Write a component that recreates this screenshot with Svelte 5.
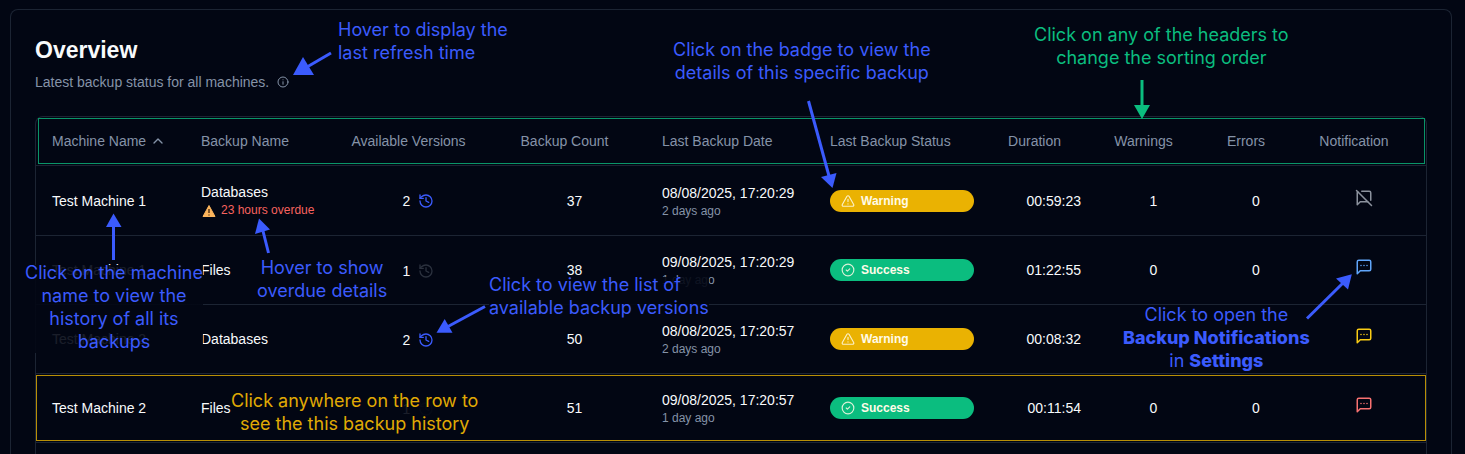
<script>
  const columns = [
    { label: 'Machine Name', width: 149, align: 'left' },
    { label: 'Backup Name', width: 149, align: 'left' },
    { label: 'Available Versions', width: 169, align: 'center' },
    { label: 'Backup Count', width: 143, align: 'center' },
    { label: 'Last Backup Date', width: 168, align: 'left' },
    { label: 'Last Backup Status', width: 176, align: 'left' },
    { label: 'Duration', width: 107, align: 'right' },
    { label: 'Warnings', width: 113, align: 'center' },
    { label: 'Errors', width: 92, align: 'center' },
    { label: 'Notification', width: 124, align: 'center' }
  ];

  const rows = [
    { machine: 'Test Machine 1', backup: 'Databases', overdue: '23 hours overdue', versions: 2, count: 37, date: '08/08/2025, 17:20:29', ago: '2 days ago', status: 'Warning', duration: '00:59:23', warnings: 1, errors: 0, notify: 'off' },
    { machine: 'Test Machine 1', backup: 'Files', versions: 1, count: 38, date: '09/08/2025, 17:20:29', ago: '1 day ago', status: 'Success', duration: '01:22:55', warnings: 0, errors: 0, notify: 'all' },
    { machine: 'Test Machine 2', backup: 'Databases', versions: 2, count: 50, date: '08/08/2025, 17:20:57', ago: '2 days ago', status: 'Warning', duration: '00:08:32', warnings: 1, errors: 0, notify: 'warnings' },
    { machine: 'Test Machine 2', backup: 'Files', versions: 1, count: 51, date: '09/08/2025, 17:20:57', ago: '1 day ago', status: 'Success', duration: '00:11:54', warnings: 0, errors: 0, notify: 'errors', framed: true }
  ];
</script>

<main class="page">
  <section class="card">
    <h1>Overview</h1>
    <p class="subtitle">
      Latest backup status for all machines.
      <button class="plain info" aria-label="Last refresh time">
        <svg viewBox="0 0 24 24" width="12" height="12" fill="none" stroke="currentColor" stroke-width="2" stroke-linecap="round">
          <circle cx="12" cy="12" r="10" /><path d="M12 16.500v-5M12 7.500h.01" />
        </svg>
      </button>
    </p>

    <div class="table-box">
      <table>
        <colgroup>
          {#each columns as c}<col style="width: {c.width}px" />{/each}
        </colgroup>
        <thead>
          <tr>
            {#each columns as c, i}
              <th class={c.align}>
                <button class="plain sort">
                  {c.label}
                  <svg viewBox="0 0 24 24" width="16" height="16" fill="none" stroke="currentColor" stroke-width="2" stroke-linecap="round" stroke-linejoin="round">
                    {#if i === 0}<path d="m18 15-6-6-6 6" />{/if}
                  </svg>
                </button>
              </th>
            {/each}
          </tr>
        </thead>
        <tbody>
          {#each rows as r}
            <tr class:framed={r.framed}>
              <td><button class="plain">{r.machine}</button></td>
              <td>
                <div>{r.backup}</div>
                {#if r.overdue}
                  <button class="plain overdue">
                    <svg viewBox="0 0 14 14" width="14" height="14">
                      <path d="M7 1.500 13 12.500H1Z" fill="#fbb45c" stroke="#fbb45c" stroke-linejoin="round" />
                      <path d="M7 5v4M7 10.500v1" stroke="#4a2c10" stroke-width="1.400" />
                    </svg>
                    {r.overdue}
                  </button>
                {/if}
              </td>
              <td class="center">
                <span class="versions">
                  {r.versions}
                  <button class="plain history" disabled={r.versions < 2} aria-label="Available versions">
                    <svg viewBox="0 0 24 24" width="16" height="16" fill="none" stroke="currentColor" stroke-width="2" stroke-linecap="round" stroke-linejoin="round">
                      <path d="M3 12a9 9 0 1 0 9-9 9.750 9.750 0 0 0-6.740 2.740L3 8" /><path d="M3 3v5h5" /><path d="M12 7v5l4 2" />
                    </svg>
                  </button>
                </span>
              </td>
              <td class="center">{r.count}</td>
              <td>
                <div>{r.date}</div>
                <div class="ago">{r.ago}</div>
              </td>
              <td>
                <button class="plain badge {r.status.toLowerCase()}">
                  <svg viewBox="0 0 24 24" width="14" height="14" fill="none" stroke="currentColor" stroke-width="2" stroke-linecap="round" stroke-linejoin="round">
                    {#if r.status === 'Warning'}
                      <path d="m21.730 18-8-14a2 2 0 0 0-3.480 0l-8 14A2 2 0 0 0 4 21h16a2 2 0 0 0 1.730-3" /><path d="M12 9v4M12 17h.01" />
                    {:else}
                      <circle cx="12" cy="12" r="10" /><path d="m9 12 2 2 4-4" />
                    {/if}
                  </svg>
                  {r.status}
                </button>
              </td>
              <td class="right">{r.duration}</td>
              <td class="center">{r.warnings}</td>
              <td class="center">{r.errors}</td>
              <td class="center">
                <button class="plain notify {r.notify}" aria-label="Notification settings">
                  <svg viewBox="0 0 24 24" width="18" height="18" fill="none" stroke="currentColor" stroke-width="2" stroke-linecap="round" stroke-linejoin="round">
                    {#if r.notify === 'off'}
                      <path d="M21 15V5a2 2 0 0 0-2-2H9" /><path d="m2 2 20 20" /><path d="M3.600 3.600c-.4.300-.6.800-.6 1.400v16l4-4h10" />
                    {:else}
                      <path d="M21 15a2 2 0 0 1-2 2H7l-4 4V5a2 2 0 0 1 2-2h14a2 2 0 0 1 2 2z" /><path d="M8 10h.01M12 10h.01M16 10h.01" />
                    {/if}
                  </svg>
                </button>
              </td>
            </tr>
          {/each}
        </tbody>
      </table>
    </div>
  </section>

  <p class="note refresh">Hover to display the<br />last refresh time</p>
  <p class="note details">Click on the badge to view the<br />details of this specific backup</p>
  <p class="note sorting">Click on any of the headers to<br />change the sorting order</p>
  <p class="note machine">Click on the machine<br />name to view the<br />history of all its<br />backups</p>
  <p class="note late">Hover to show<br />overdue details</p>
  <p class="note list">Click to view the list of<br />available backup versions</p>
  <p class="note settings">Click to open the<br /><b>Backup Notifications</b><br />in <b>Settings</b></p>
  <p class="note row">Click anywhere on the row to<br />see the this backup history</p>

  <svg class="arrows" width="1465" height="454" viewBox="0 0 1465 454" aria-hidden="true">
    <g stroke="#3b5bfd" fill="#3b5bfd">
      <path d="M331 53 307 67" /><path class="head" d="M293 75 303 57 314 75Z" />
      <path d="M808.500 101 829 176" /><path class="head" d="M832.500 188 821 177 836.500 173Z" />
      <path d="M113.500 260V226" /><path class="head" d="M113.500 213.500 106 227H121.500Z" />
      <path d="M268.500 253 263 231" /><path class="head" d="M259 218.500 255 234 270 229.500Z" />
      <path d="M485 306.500 448 326.500" /><path class="head" d="M436.500 332.800 444.700 319 452.500 332.800Z" />
      <path d="M1307 318.500 1343 283" /><path class="head" d="M1351.800 274.300 1336 278.500 1348 289.500Z" />
    </g>
    <g stroke="#0bbd7f" fill="#0bbd7f">
      <path d="M1142 80V106" /><path class="head" d="M1142 119 1134 105H1150Z" />
    </g>
  </svg>
</main>

<style>
  :global(body) {
    background: #020613;
    overflow: hidden;
  }

  .page {
    position: relative;
    display: flex;
    box-sizing: border-box;
    min-height: 100vh;
    padding: 9px 13px 0 10px;
    overflow: hidden;
    color: #f8fafc;
    font: 14px/20px "Liberation Sans", Arial, sans-serif;
  }

  .card {
    flex: 1;
    display: flex;
    flex-direction: column;
    min-width: 0;
    padding: 24px 24px 0;
    border: 1px solid #1c2433;
    border-bottom: 0;
    border-radius: 8px 8px 0 0;
  }

  h1 {
    margin: 0 0 6px;
    font-size: 23px;
    line-height: 32px;
  }

  .subtitle {
    display: flex;
    align-items: center;
    gap: 8px;
    margin: 0 0 24px;
    color: #8593a8;
  }

  .plain {
    padding: 0;
    border: 0;
    background: none;
    color: inherit;
    font: inherit;
    cursor: pointer;
  }

  svg {
    display: block;
    flex: none;
  }

  .table-box {
    flex: 1;
    border: 1px solid #1c2433;
    border-bottom: 0;
    border-radius: 8px 8px 0 0;
  }

  table {
    width: 100%;
    table-layout: fixed;
    border-collapse: separate;
    border-spacing: 0;
  }

  tr {
    position: relative;
  }

  th,
  td {
    padding: 16px;
    border-bottom: 1px solid #1c2433;
    text-align: left;
    vertical-align: middle;
    white-space: nowrap;
  }

  th {
    height: 46px;
    padding: 0 16px 2px;
    color: #8593a8;
    font-weight: 400;
  }

  .center {
    padding-inline: 0;
    text-align: center;
  }

  .right {
    text-align: right;
  }

  .sort {
    display: inline-flex;
    align-items: center;
    gap: 4px;
    vertical-align: middle;
  }

  thead tr::after,
  .framed::after {
    content: "";
    position: absolute;
    inset: 1px 1px 2px 2px;
    border: 1px solid #0a9468;
    pointer-events: none;
  }

  .framed::after {
    inset: 1px 0 2px;
    border-color: #b98f06;
  }

  .overdue {
    display: flex;
    align-items: center;
    gap: 5px;
    padding-left: 1px;
    color: #f8635f;
    font-size: 12px;
    line-height: 17px;
  }

  .ago {
    color: #8593a8;
    font-size: 12px;
    line-height: 16px;
  }

  .versions {
    display: inline-flex;
    align-items: center;
    gap: 8px;
    vertical-align: middle;
  }

  .history {
    color: #3b5bfd;
  }

  .history:disabled {
    color: #2b313e;
  }

  .badge {
    display: flex;
    align-items: center;
    gap: 6px;
    width: 100%;
    height: 22px;
    padding: 0 11px;
    border-radius: 11px;
    color: #fffbe8;
    font-size: 12px;
    font-weight: 700;
  }

  .badge svg {
    opacity: 0.85;
  }

  .warning {
    background: #eab202;
  }

  .success {
    background: #0bbd7f;
  }

  .notify {
    display: inline-block;
    padding-bottom: 6px;
    vertical-align: middle;
  }

  .off {
    color: #8b919d;
  }

  .all {
    color: #60a5fa;
  }

  .warnings {
    color: #facc15;
  }

  .errors {
    color: #f87171;
  }

  .note {
    position: absolute;
    margin: 0;
    color: #3b5bfd;
    font: 18px/23px Inter, sans-serif;
    text-align: center;
    white-space: nowrap;
    background: linear-gradient(transparent 4px, rgba(2, 6, 19, 0.9) 4px);
    pointer-events: none;
  }

  .refresh {
    top: 18px;
    left: 338px;
    text-align: left;
  }

  .details {
    top: 38px;
    left: 673px;
  }

  .sorting {
    top: 23px;
    left: 1034px;
    color: #0bbd7f;
  }

  .machine {
    top: 261px;
    left: 25px;
  }

  .late {
    top: 256px;
    left: 257px;
  }

  .list {
    top: 273px;
    left: 489px;
    text-align: left;
  }

  .settings {
    top: 303px;
    left: 1119px;
    padding: 0 4px;
    background: linear-gradient(transparent 4px, #020613 4px);
  }

  .settings b {
    font-weight: 800;
  }

  .row {
    top: 389px;
    left: 231px;
    color: #e0aa04;
  }

  .arrows {
    position: absolute;
    top: 0;
    left: 0;
    stroke-width: 3;
    pointer-events: none;
  }

  .head {
    stroke: none;
  }
</style>
